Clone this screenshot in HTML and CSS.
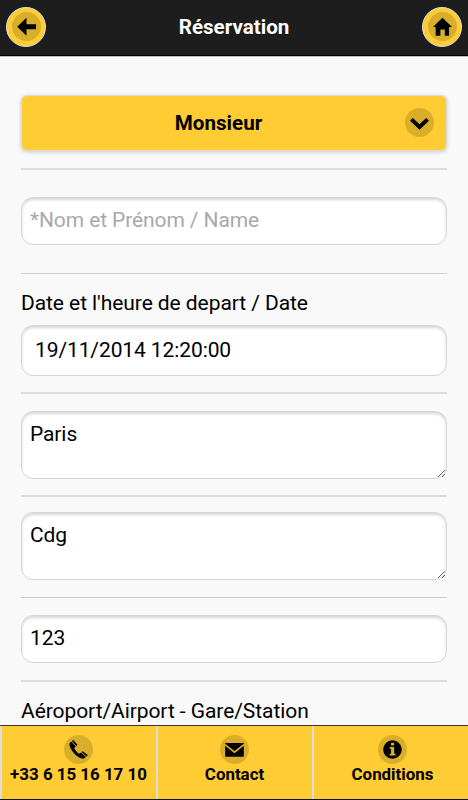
FILE: index.html
```html
<!DOCTYPE html>
<html lang="fr">
<head>
<meta charset="utf-8">
<meta name="viewport" content="width=device-width, initial-scale=1">
<title>Réservation</title>
<link rel="stylesheet" href="styles.css">
</head>
<body>

<header class="header">
  <a href="#" class="round-btn" title="Retour">
    <svg class="icon" viewBox="0 0 28 28">
      <circle class="disc" cx="14" cy="14" r="14"/>
      <path d="M5 14.3 14 5.5V11.9H23.2V16.7H14V23Z"/>
    </svg>
  </a>
  <h1 class="title">Réservation</h1>
  <a href="#" class="round-btn" title="Accueil">
    <svg class="icon" viewBox="0 0 28 28">
      <circle class="disc" cx="14" cy="14" r="14"/>
      <path d="M14 5.5 23.2 14.6H20.4V23H16.2V17H12V23H7.4V14.6H4.8Z"/>
    </svg>
  </a>
</header>

<form class="content">
  <div class="row row-civility">
    <button type="button" class="select-btn">
      <span class="select-text">Monsieur</span>
      <svg class="icon" viewBox="0 0 28 28">
        <circle class="disc" cx="14" cy="14" r="14"/>
        <path class="chevron" d="M6.2 11 14 18.3 21.8 11"/>
      </svg>
    </button>
  </div>

  <div class="row row-name">
    <input type="text" class="field" name="name" placeholder="*Nom et Prénom / Name">
  </div>

  <div class="row row-date">
    <label class="label" for="date">Date et l'heure de depart / Date</label>
    <input type="text" class="field field-date" id="date" name="date" value="19/11/2014 12:20:00">
  </div>

  <div class="row row-from">
    <textarea class="field area" name="from">Paris</textarea>
  </div>

  <div class="row row-to">
    <textarea class="field area" name="to">Cdg</textarea>
  </div>

  <div class="row row-number">
    <input type="text" class="field" name="number" value="123">
  </div>

  <div class="row row-place">
    <label class="label">Aéroport/Airport - Gare/Station</label>
  </div>
</form>

<!-- Footer navbar -->
<footer class="footer">
  <a href="#" class="tab">
    <svg class="icon" viewBox="0 0 28 28">
      <circle class="disc" cx="14" cy="14" r="14"/>
      <path d="M5.2 8.2C5 14 13 22.8 18.8 22.9L21.2 21.2 16.4 17 14.4 18.2C12.8 17 10.8 14.8 9.8 12.8L11.3 11.1 7.1 6.3Z"/>
      <path d="M7.6 5.8 9 4.9 13 9.4 11.8 10.6ZM17 16.5 18.2 15.7 23 19.6 21.7 20.8Z"/>
    </svg>
    <span class="tab-text">+33 6 15 16 17 10</span>
  </a>
  <a href="#" class="tab">
    <svg class="icon" viewBox="0 0 28 28">
      <circle class="disc" cx="14" cy="14" r="14"/>
      <path d="M5 7.8H23V8.4L14 15.4 5 8.4ZM5 10.4 14 17.6 23 10.4V21H5Z"/>
    </svg>
    <span class="tab-text">Contact</span>
  </a>
  <a href="#" class="tab tab-last">
    <svg class="icon" viewBox="0 0 28 28">
      <circle class="disc" cx="14" cy="14" r="14"/>
      <circle cx="14" cy="14" r="9"/>
      <path class="info" d="M12.6 7.6H15.6V10.2H12.6ZM11.4 11.6H15.6V18H16.9V19.8H11.2V18H12.6V13.3H11.4Z"/>
    </svg>
    <span class="tab-text">Conditions</span>
  </a>
</footer>

</body>
</html>
```

FILE: styles.css
```css
* {
  box-sizing: border-box;
}

body {
  margin: 0;
  height: 800px;
  display: flex;
  flex-direction: column;
  overflow: hidden;
  background: #f9f9f9;
  color: #000;
  font-family: Roboto, sans-serif;
  font-size: 21px;
}

/* Header */
.header {
  flex: none;
  height: 57px;
  padding: 0 6px 3px;
  display: flex;
  justify-content: space-between;
  align-items: center;
  background: #1d1d1d;
  border-bottom: 1px solid #bbb;
  box-shadow: inset 0 -1px 0 #000;
}

.title {
  margin: 0;
  color: #fff;
  font-size: 20.6px;
  font-weight: bold;
  text-shadow: 0 1px 0 #111;
}

.round-btn {
  width: 40px;
  height: 40px;
  display: flex;
  justify-content: center;
  align-items: center;
  background: #fc3;
  border: 1px solid #ddd;
  border-radius: 50%;
}

.icon {
  flex: none;
  display: block;
  width: 29px;
  height: 29px;
}

.disc {
  fill: #d9ae2b;
}

.chevron {
  fill: none;
  stroke: #000;
  stroke-width: 3.8;
}

.info {
  fill: #d9ae2b;
}

/* Form */
.content {
  flex: 1;
  min-height: 0;
  overflow: hidden;
  padding: 0 21px;
}

.row {
  border-bottom: 2px solid #dcdcdc;
}

.row-civility {
  height: 113px;
  padding-top: 38px;
}

.row-name {
  height: 104px;
  padding-top: 27px;
  border-bottom: 1px solid #d0d0d0;
}

.row-date {
  height: 120px;
  padding-top: 15px;
}

.row-from {
  height: 103px;
  padding-top: 17px;
}

.row-to {
  height: 101px;
  padding-top: 15px;
  border-bottom: 1px solid #ccc;
}

.row-number {
  height: 84px;
  padding-top: 17px;
}

.row-place {
  padding-top: 15px;
  border: none;
}

.select-btn {
  width: 100%;
  height: 56px;
  padding: 0 12px 1px 10px;
  display: flex;
  align-items: center;
  background: #fc3;
  border: 1px solid #ddd;
  border-radius: 6px;
  box-shadow: 0 1px 4px rgba(0, 0, 0, 0.2);
  color: #000;
  font: bold 20.6px Roboto, sans-serif;
}

.select-text {
  flex: 1;
  text-align: center;
}

.label {
  display: block;
  height: 36px;
  line-height: 28px;
  letter-spacing: -0.07px;
  white-space: nowrap;
}

.field {
  display: block;
  width: 100%;
  height: 48px;
  margin: 0;
  padding: 0 8px 2px;
  background: #fff;
  border: 1px solid #d6d6d6;
  border-radius: 12px;
  box-shadow: inset 0 2px 3px rgba(0, 0, 0, 0.16);
  color: #000;
  font: 21px Roboto, sans-serif;
  letter-spacing: -0.1px;
  outline: none;
}

.field::placeholder {
  color: #a9a9a9;
}

.field-date {
  height: 51px;
  padding: 0 13px 2px;
}

.area {
  height: 68px;
  padding: 9px 8px;
  line-height: 26px;
}

/* Footer */
.footer {
  flex: none;
  height: 75px;
  display: grid;
  grid-template-columns: repeat(3, 1fr);
  background: #fc3;
  border-top: 1px solid #333;
  border-bottom: 1px solid #111;
}

.tab {
  padding: 9px 1px 0 0;
  display: flex;
  flex-direction: column;
  align-items: center;
  border-left: 1.5px solid #ddd;
  border-left-width: 2px;
  color: #000;
  text-decoration: none;
}

.tab-last {
  padding: 9px 0 0 3px;
}

.tab-text {
  margin-top: -2px;
  font-size: 16.9px;
  font-weight: bold;
  line-height: 24px;
  white-space: nowrap;
}
```
